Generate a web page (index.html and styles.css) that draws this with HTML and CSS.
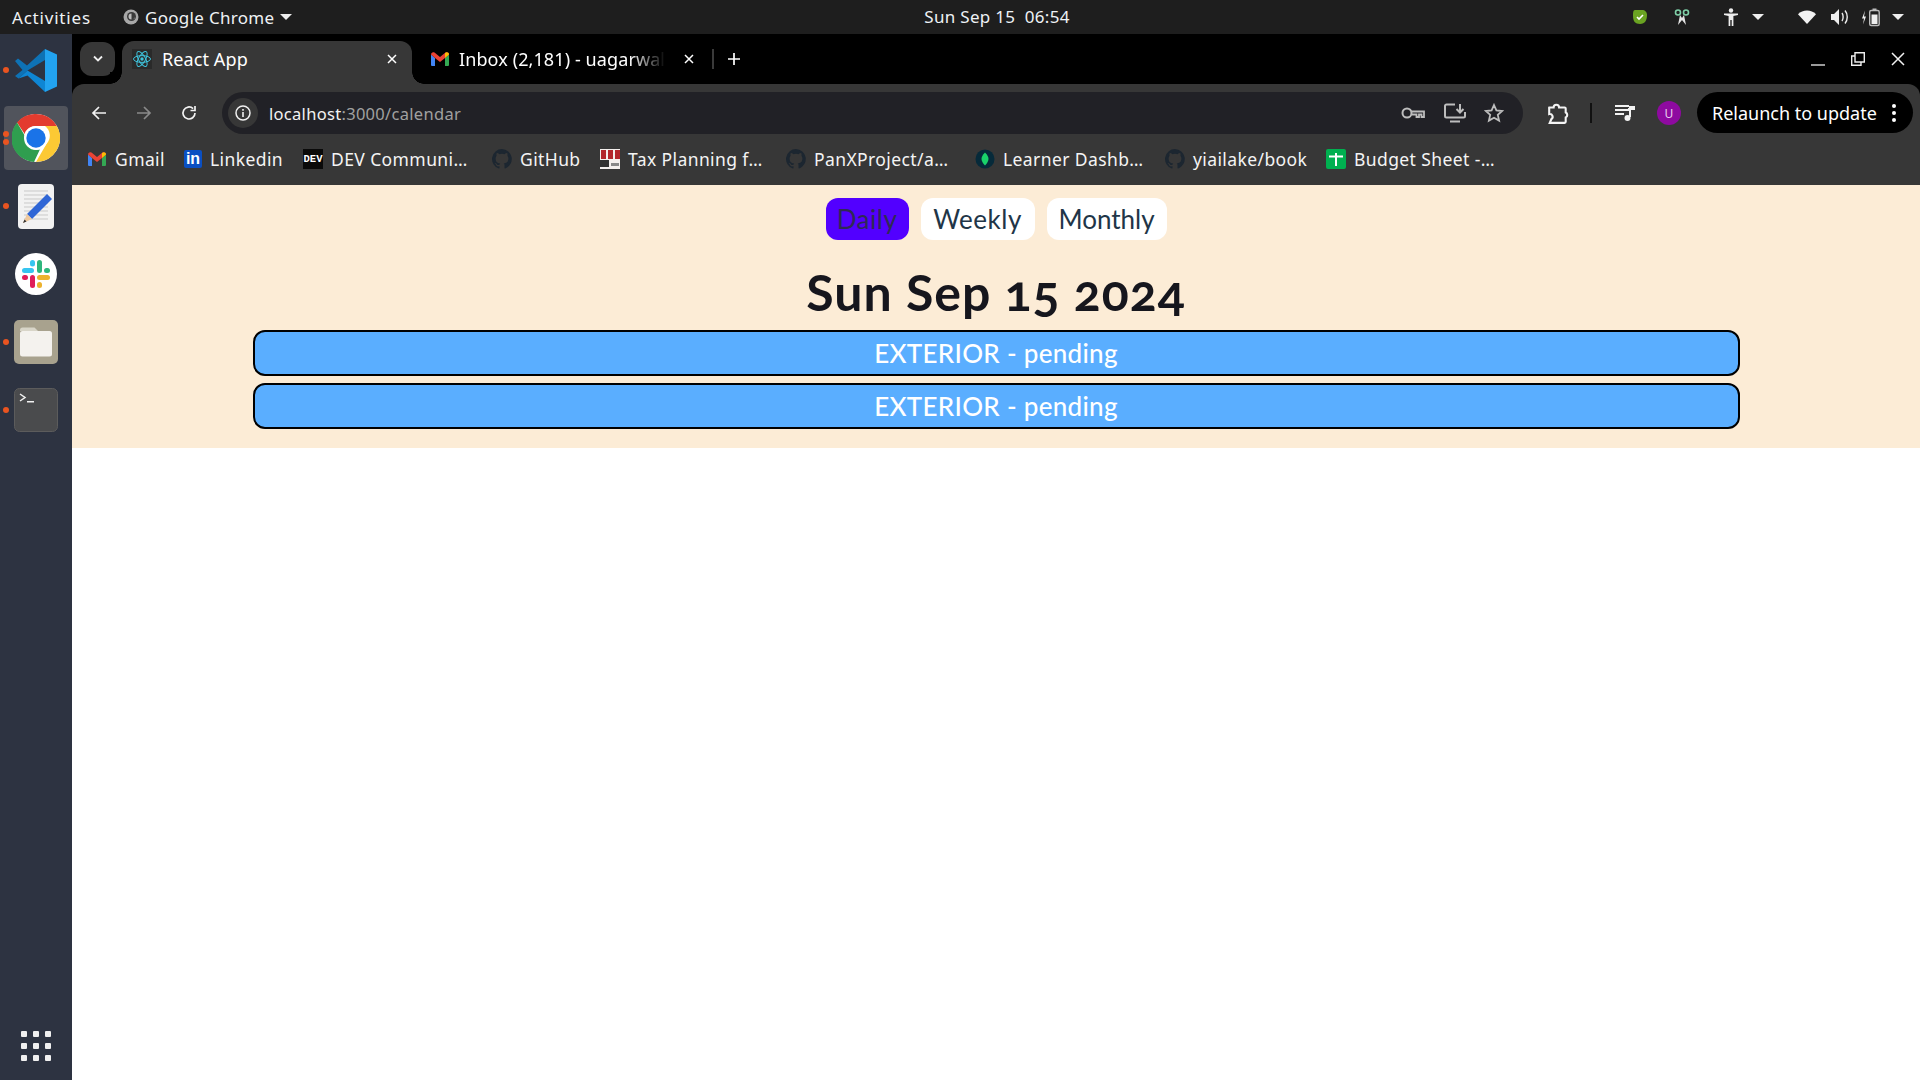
FILE: index.html
```html
<!DOCTYPE html>
<html lang="en">
<head>
<meta charset="utf-8">
<title>React App</title>
<link rel="stylesheet" href="styles.css">
</head>
<body>
<div class="screen">
  <header class="topbar">
    <div class="top-left">
      <span class="activities">Activities</span>
      <span class="app-menu">
        <svg class="app-icon" viewBox="0 0 16 16"><circle cx="8" cy="8" r="7.500" fill="#a8a8a8"/><circle cx="8.500" cy="7.500" r="4.500" fill="#3a3a3a"/><path d="M8.500 4.500a3 3 0 1 0 3 3v2a5 5 0 0 1-3 1" fill="#bdbdbd"/></svg>
        Google Chrome
        <i class="caret"></i>
      </span>
    </div>
    <div class="clock">Sun Sep 15&nbsp;&nbsp;06:54</div>
    <div class="tray">
      <svg class="tray-shield" viewBox="0 0 16 16"><path d="M3 1h7c3 0 5 2 5 5 0 5-2 9-7 9-5 0-7-3-7-8 0-3 0-6 2-6z" fill="#6aa322"/><path d="M5 8l2 2 4-4" fill="none" stroke="#fff" stroke-width="1.600"/></svg>
      <svg class="tray-scissors" viewBox="0 0 16 17"><circle cx="4" cy="3.500" r="2.500" fill="none" stroke="#7fd0a8" stroke-width="1.600"/><circle cx="12" cy="3.500" r="2.500" fill="none" stroke="#7fd0a8" stroke-width="1.600"/><path d="M6 6l-2 10 4-5 4 5-2-10-2 3z" fill="#e4e4e4"/></svg>
      <svg class="tray-person" viewBox="0 0 16 18"><circle cx="8" cy="2.500" r="2.200" fill="#eee"/><path d="M1 5.500h14v1.600l-4.600.8V18H8.700v-6H7.300v6H5.600V7.900L1 7.100z" fill="#eee"/></svg>
      <i class="caret tray-caret"></i>
      <svg class="tray-wifi" viewBox="0 0 18 14"><path d="M0 4.200C2.400 1.800 5.600.5 9 .5s6.600 1.300 9 3.700L9 14z" fill="#f2f2f2"/></svg>
      <svg class="tray-volume" viewBox="0 0 20 18"><path d="M1 6h3l5-5v16l-5-5H1z" fill="#eee"/><path d="M12 5c1.500 2 1.500 6 0 8M15 2.500c3 3.500 3 9.500 0 13" fill="none" stroke="#eee" stroke-width="1.400"/></svg>
      <svg class="tray-battery" viewBox="0 0 18 18"><path d="M3 2L0 10h2l-1 6 3-8H2z" fill="#eee"/><rect x="7.700" y="2" width="9.500" height="15" rx="1.500" fill="none" stroke="#bbb" stroke-width="1.400"/><rect x="10.500" y="0" width="4" height="2" fill="#bbb"/><rect x="9.500" y="6" width="6" height="9.500" fill="#eee"/></svg>
      <i class="caret"></i>
    </div>
  </header>

  <div class="desktop">
    <nav class="dock">
      <div class="dock-slot">
        <span class="run-dot"></span>
        <svg class="ic-vscode" viewBox="0 0 42 43"><path d="M0 12l3-2.500 9 7L30 0v11L12.500 21.500 3.500 29.500 0 27l7.500-6z" fill="#0e72b5"/><path d="M3.500 29.500l9-8L30 32v11L12.500 26.500z" fill="#0e86d4"/><path d="M30 0l12 5.500v32L30 43z" fill="#22a3f0"/></svg>
      </div>
      <div class="dock-slot is-active">
        <span class="run-dot run-dot-a"></span>
        <span class="run-dot run-dot-b"></span>
        <svg class="ic-chrome" viewBox="0 0 48 48">
          <circle cx="24" cy="24" r="24" fill="#fff"/>
          <path d="M24 0a24 24 0 0 1 20.800 12H24a12 12 0 0 0-11.300 8L5 8.500A24 24 0 0 1 24 0z" fill="#e33b2e"/>
          <path d="M44.800 12A24 24 0 0 1 24 48l10.400-18A12 12 0 0 0 33 12z" fill="#fcc934"/>
          <path d="M5 8.500l8 13.500a12 12 0 0 0 15 13.300L22 47.900A24 24 0 0 1 5 8.500z" fill="#2f9e4f"/>
          <circle cx="24" cy="24" r="12" fill="#fff"/>
          <circle cx="24" cy="24" r="9.700" fill="#1a73e8"/>
        </svg>
      </div>
      <div class="dock-slot">
        <span class="run-dot"></span>
        <svg class="ic-editor" viewBox="0 0 36 45">
          <rect width="36" height="45" rx="4" fill="#f2f2f2"/>
          <path d="M6 7h24M6 11h24M6 15h24M6 19h24M6 23h24M6 27h24M6 31h24M6 35h24" stroke="#c9c9c9" stroke-width="1"/>
          <path d="M29 10l5 5-20 20-5-5z" fill="#2f66d6"/>
          <path d="M9 30l5 5-9 4z" fill="#eec9a0"/>
          <path d="M5 39l1.500-3.500 2 2z" fill="#333"/>
        </svg>
      </div>
      <div class="dock-slot">
        <svg class="ic-slack" viewBox="0 0 42 42">
          <circle cx="21" cy="21" r="21" fill="#fff"/>
          <rect x="7" y="15" width="12" height="5" rx="2.500" fill="#36c5f0"/><rect x="15" y="7" width="5" height="6.500" rx="2.500" fill="#36c5f0"/>
          <rect x="22" y="7" width="5" height="13" rx="2.500" fill="#2eb67d"/><rect x="29" y="15" width="6" height="5" rx="2.500" fill="#2eb67d"/>
          <rect x="22" y="22" width="13" height="5" rx="2.500" fill="#ecb22e"/><rect x="22" y="29" width="5" height="6" rx="2.500" fill="#ecb22e"/>
          <rect x="15" y="22" width="5" height="13" rx="2.500" fill="#e01e5a"/><rect x="7" y="22" width="6" height="5" rx="2.500" fill="#e01e5a"/>
        </svg>
      </div>
      <div class="dock-slot">
        <span class="run-dot"></span>
        <svg class="ic-files" viewBox="0 0 44 44">
          <rect width="44" height="44" rx="5" fill="#a8a28e"/>
          <path d="M6 10a2.500 2.500 0 0 1 2.500-2.500h12L24 11h-18z" fill="#d8d5c8"/>
          <rect x="6" y="11" width="32" height="25.500" rx="2.500" fill="#f4f2ee"/>
        </svg>
      </div>
      <div class="dock-slot">
        <span class="run-dot"></span>
        <svg class="ic-terminal" viewBox="0 0 44 44">
          <rect x="0.500" y="0.500" width="43" height="43" rx="5" fill="#4a4b4d" stroke="#5c5c5c"/>
          <path d="M6 6l5 3.500-5 3.500" fill="none" stroke="#f2f2f2" stroke-width="1.500"/>
          <rect x="13" y="13" width="7" height="1.500" fill="#f2f2f2"/>
        </svg>
      </div>
      <div class="dock-slot apps">
        <div class="apps-grid"><i></i><i></i><i></i><i></i><i></i><i></i><i></i><i></i><i></i></div>
      </div>
    </nav>

    <div class="browser">
      <div class="tabstrip">
        <button class="tab-search">
          <svg viewBox="0 0 12 8" class="ic-chev"><path d="M2 1.500l4 4 4-4" fill="none" stroke="#f0f0f0" stroke-width="1.800"/></svg>
        </button>
        <div class="tab tab-active">
          <span class="favicon-react">
            <svg viewBox="0 0 20 20"><rect width="20" height="20" fill="#2a2a2a"/><g fill="none" stroke="#3fc3dc" stroke-width="1"><ellipse cx="10" cy="10" rx="8.500" ry="3.400"/><ellipse cx="10" cy="10" rx="8.500" ry="3.400" transform="rotate(60 10 10)"/><ellipse cx="10" cy="10" rx="8.500" ry="3.400" transform="rotate(120 10 10)"/></g><circle cx="10" cy="10" r="1.700" fill="#3fc3dc"/></svg>
          </span>
          <span class="tab-title">React App</span>
          <svg class="tab-close" viewBox="0 0 10 10"><path d="M1 1l8 8M9 1l-8 8" stroke="#fff" stroke-width="1.500"/></svg>
        </div>
        <div class="tab tab-other">
          <svg class="ic-gmail" viewBox="0 0 18 14"><path d="M0 2.500V13a1 1 0 0 0 1 1h3V6z" fill="#4285f4"/><path d="M18 2.500V13a1 1 0 0 1-1 1h-3V6z" fill="#34a853"/><path d="M0 2.500C0 .500 2 -.500 3.500.600L9 5l5.500-4.400C16-.500 18 .500 18 2.500L14 6 9 10 4 6z" fill="#ea4335"/><path d="M14 .900C16-.500 18 .500 18 2.500L14 6z" fill="#fbbc04"/></svg>
          <span class="tab-title tab-title-fade">Inbox (2,181) - uagarwal3</span>
          <svg class="tab-close tab-close-other" viewBox="0 0 10 10"><path d="M1 1l8 8M9 1l-8 8" stroke="#fff" stroke-width="1.500"/></svg>
        </div>
        <span class="tab-sep"></span>
        <svg class="tab-plus" viewBox="0 0 14 14"><path d="M7 1v12M1 7h12" stroke="#fff" stroke-width="1.700"/></svg>
        <div class="winctl">
          <svg viewBox="0 0 14 14" class="win-btn"><path d="M0 13h14" stroke="#ddd" stroke-width="1.400"/></svg>
          <svg viewBox="0 0 14 14" class="win-btn"><path d="M4 .700h9.300V10H4zM4 4H.700v9.300H10V10" fill="none" stroke="#eee" stroke-width="1.400"/></svg>
          <svg viewBox="0 0 14 14" class="win-btn"><path d="M1 1l12 12M13 1L1 13" stroke="#f2f2f2" stroke-width="1.500"/></svg>
        </div>
      </div>

      <div class="toolbar">
        <svg class="nav-ic nav-back" viewBox="0 0 16 16"><path d="M15 8H2M8 2L2 8l6 6" fill="none" stroke="#f2f2f2" stroke-width="1.700"/></svg>
        <svg class="nav-ic nav-forward" viewBox="0 0 16 16"><path d="M1 8h13M8 2l6 6-6 6" fill="none" stroke="#8a8a8a" stroke-width="1.700"/></svg>
        <svg class="nav-ic nav-reload" viewBox="0 0 16 16"><path d="M14 8a6 6 0 1 1-1.900-4.400M14 1v4.500H9.500" fill="none" stroke="#f2f2f2" stroke-width="1.700"/></svg>
        <div class="omnibox">
          <span class="site-info"><svg viewBox="0 0 16 16"><circle cx="8" cy="8" r="7" fill="none" stroke="#f0f0f0" stroke-width="1.500"/><path d="M8 7v5M8 4v1.700" stroke="#f0f0f0" stroke-width="1.600"/></svg></span>
          <span class="url"><span class="url-host">localhost</span>:3000/calendar</span>
          <span class="omni-actions">
            <svg class="omni-key" viewBox="0 0 24 14"><circle cx="6" cy="7" r="4.500" fill="none" stroke="#bdbdbd" stroke-width="2"/><path d="M10.500 5.500H23V11h-2.500V8.500H18V11h-2.500V8.500H10.500" fill="none" stroke="#bdbdbd" stroke-width="1.800"/></svg>
            <svg class="omni-install" viewBox="0 0 22 20"><path d="M11 1.500H2.500a1.500 1.500 0 0 0-1.500 1.500v10a1.500 1.500 0 0 0 1.500 1.500h17A1.500 1.500 0 0 0 21 13V9M6 18.500h10" fill="none" stroke="#bdbdbd" stroke-width="2"/><path d="M16 1v8M12.500 6l3.500 3.500L19.500 6" fill="none" stroke="#bdbdbd" stroke-width="2"/></svg>
            <svg class="omni-star" viewBox="0 0 20 20"><path d="M10 2l2.400 5.400 5.800.6-4.400 3.900 1.300 5.700L10 14.700l-5.100 2.900 1.300-5.700L1.800 8l5.800-.6z" fill="none" stroke="#bdbdbd" stroke-width="1.800"/></svg>
          </span>
        </div>
        <svg class="tool-ext" viewBox="0 0 20 20"><path d="M2 5h4a2.500 2.500 0 0 1 5 0h5a1 1 0 0 1 1 1v3.500a2.500 2.500 0 0 1 0 4.500V18a1 1 0 0 1-1 1H2.500l1.500-3.500a2.500 2.500 0 0 0-2-4.500V6a1 1 0 0 1 0-1z" fill="none" stroke="#f4f4f4" stroke-width="1.900"/></svg>
        <span class="tool-sep"></span>
        <svg class="tool-media" viewBox="0 0 20 18"><path d="M0 2h14M0 6h14M0 10h9" stroke="#f2f2f2" stroke-width="2"/><path d="M13 5h6V3h-4v10" fill="none" stroke="#f2f2f2" stroke-width="2"/><circle cx="12.500" cy="14" r="3" fill="#f2f2f2"/></svg>
        <span class="avatar">U</span>
        <div class="relaunch">
          <span>Relaunch to update</span>
          <span class="dots"><i></i><i></i><i></i></span>
        </div>
      </div>

      <div class="bookmarks">
        <span class="bm bm-gmail"><svg class="ic-gmail" viewBox="0 0 18 14"><path d="M0 2.500V13a1 1 0 0 0 1 1h3V6z" fill="#4285f4"/><path d="M18 2.500V13a1 1 0 0 1-1 1h-3V6z" fill="#34a853"/><path d="M0 2.500C0 .500 2 -.500 3.500.600L9 5l5.500-4.400C16-.500 18 .500 18 2.500L14 6 9 10 4 6z" fill="#ea4335"/><path d="M14 .900C16-.500 18 .500 18 2.500L14 6z" fill="#fbbc04"/></svg>Gmail</span>
        <span class="bm bm-linkedin"><span class="fav-li">in</span>Linkedin</span>
        <span class="bm bm-dev"><span class="fav-dev">DEV</span>DEV Communi…</span>
        <span class="bm bm-github"><svg class="fav" viewBox="0 0 16 16"><path fill="#1c2630" d="M8 0a8 8 0 0 0-2.500 15.600c.4.100.5-.2.500-.4v-1.400c-2.200.5-2.700-1-2.700-1-.4-.9-.9-1.200-.9-1.200-.7-.5.100-.5.100-.5.800.100 1.200.8 1.200.8.700 1.200 1.900.9 2.300.7.100-.5.300-.9.500-1.100-1.800-.2-3.600-.9-3.600-4 0-.9.300-1.600.8-2.100-.1-.2-.4-1 .1-2.100 0 0 .7-.2 2.200.8a7.500 7.500 0 0 1 4 0c1.500-1 2.200-.8 2.200-.8.400 1.100.2 1.900.1 2.100.5.600.8 1.300.8 2.100 0 3.100-1.900 3.700-3.700 3.900.3.300.6.800.6 1.500v2.200c0 .2.100.5.600.4A8 8 0 0 0 8 0z"/></svg>GitHub</span>
        <span class="bm bm-tax"><svg class="fav" viewBox="0 0 20 20"><rect width="20" height="20" fill="#f4f0ee"/><rect x="1" y="1" width="5" height="9" fill="#b3262c"/><rect x="8" y="1" width="5" height="9" fill="#b3262c"/><rect x="15" y="1" width="5" height="9" fill="#b3262c"/><rect x="0" y="11" width="9" height="7" fill="#333"/><rect x="11" y="14" width="8" height="3" fill="#888"/></svg>Tax Planning f…</span>
        <span class="bm bm-pan"><svg class="fav" viewBox="0 0 16 16"><path fill="#1c2630" d="M8 0a8 8 0 0 0-2.500 15.600c.4.100.5-.2.500-.4v-1.400c-2.200.5-2.700-1-2.700-1-.4-.9-.9-1.200-.9-1.200-.7-.5.100-.5.100-.5.800.100 1.200.8 1.200.8.700 1.200 1.900.9 2.300.7.100-.5.300-.9.500-1.100-1.800-.2-3.600-.9-3.600-4 0-.9.300-1.600.8-2.100-.1-.2-.4-1 .1-2.100 0 0 .7-.2 2.200.8a7.500 7.500 0 0 1 4 0c1.500-1 2.200-.8 2.200-.8.400 1.100.2 1.900.1 2.100.5.600.8 1.300.8 2.100 0 3.100-1.900 3.700-3.700 3.900.3.300.6.800.6 1.500v2.200c0 .2.100.5.600.4A8 8 0 0 0 8 0z"/></svg>PanXProject/a…</span>
        <span class="bm bm-learner"><svg class="fav" viewBox="0 0 20 20"><circle cx="10" cy="10" r="9.500" fill="#062a3a"/><path d="M10 3.500c2.500 2.500 3.500 4.500 3.500 6.500S12 14.500 10 16.500C8 14.500 6.500 12 6.500 10S7.500 6 10 3.500z" fill="#19d26a"/></svg>Learner Dashb…</span>
        <span class="bm bm-yia"><svg class="fav" viewBox="0 0 16 16"><path fill="#1c2630" d="M8 0a8 8 0 0 0-2.500 15.600c.4.100.5-.2.500-.4v-1.400c-2.200.5-2.700-1-2.700-1-.4-.9-.9-1.200-.9-1.200-.7-.5.100-.5.100-.5.800.100 1.200.8 1.200.8.700 1.200 1.900.9 2.300.7.100-.5.300-.9.500-1.100-1.800-.2-3.600-.9-3.600-4 0-.9.300-1.600.8-2.100-.1-.2-.4-1 .1-2.100 0 0 .7-.2 2.200.8a7.500 7.500 0 0 1 4 0c1.500-1 2.200-.8 2.200-.8.400 1.100.2 1.900.1 2.100.5.600.8 1.300.8 2.100 0 3.100-1.900 3.700-3.700 3.900.3.300.6.800.6 1.500v2.200c0 .2.100.5.600.4A8 8 0 0 0 8 0z"/></svg>yiailake/book</span>
        <span class="bm bm-budget"><svg class="fav" viewBox="0 0 20 20"><rect width="20" height="20" rx="2" fill="#00b050"/><path d="M3 7.500h14M10 4v13" stroke="#fff" stroke-width="2"/></svg>Budget Sheet -…</span>
      </div>

      <main class="page">
        <section class="calendar">
          <div class="view-tabs">
            <button class="view-btn view-daily">Daily</button>
            <button class="view-btn view-weekly">Weekly</button>
            <button class="view-btn view-monthly">Monthly</button>
          </div>
          <h1 class="date-title">Sun Sep 15 2024</h1>
          <div class="event">EXTERIOR - pending</div>
          <div class="event">EXTERIOR - pending</div>
        </section>
      </main>
    </div>
  </div>
</div>
</body>
</html>
```
FILE: styles.css
```css
* { box-sizing: border-box; }
html, body { margin: 0; padding: 0; background: #fff; }
body { font-family: "Noto Sans", sans-serif; }
svg { display: block; flex: none; }
.screen { width: 1920px; height: 1080px; display: flex; flex-direction: column; overflow: hidden; }

/* top bar */
.topbar { height: 34px; flex: none; background: #1e1e1e; color: #eef2f5; display: grid; grid-template-columns: 1fr auto 1fr; align-items: center; font-size: 17px; letter-spacing: 0.3px; padding: 0 16px 0 12px; }
.top-left { display: flex; align-items: center; }
.activities { width: 111px; letter-spacing: 0.8px; }
.app-menu { display: flex; align-items: center; gap: 6px; }
.app-icon { width: 16px; height: 16px; }
.caret { display: block; width: 0; height: 0; border-left: 6px solid transparent; border-right: 6px solid transparent; border-top: 6px solid #eee; }
.clock { text-align: center; margin-left: 78px; padding-bottom: 1px; }
.tray { display: flex; align-items: center; justify-content: flex-end; }
.tray-shield { width: 16px; height: 16px; margin-right: 26px; }
.tray-scissors { width: 16px; height: 17px; margin-right: 33px; }
.tray-person { width: 16px; height: 18px; margin-right: 13px; }
.tray-caret { margin-right: 34px; }
.tray-wifi { width: 18px; height: 14px; margin-right: 14px; }
.tray-volume { width: 20px; height: 18px; margin-right: 12px; }
.tray-battery { width: 18px; height: 19px; margin-right: 12px; }

.desktop { flex: 1; display: flex; min-height: 0; }

/* dock */
.dock { width: 72px; flex: none; background: #2d3341; display: flex; flex-direction: column; align-items: center; gap: 4px; padding: 4px 0 2px; }
.dock-slot { width: 64px; height: 64px; display: flex; align-items: center; justify-content: center; position: relative; border-radius: 4px; }
.dock-slot.is-active { background: #51545c; }
.dock-slot.apps { margin-top: auto; }
.run-dot { position: absolute; left: 0; top: 29px; width: 6px; height: 6px; border-radius: 50%; background: #e95420; margin-left: -1px; }
.run-dot-a { top: 25px; }
.run-dot-b { top: 33px; }
.ic-vscode { width: 42px; height: 43px; }
.ic-chrome { width: 48px; height: 48px; }
.ic-editor { width: 36px; height: 45px; }
.ic-slack { width: 42px; height: 42px; }
.ic-files, .ic-terminal { width: 44px; height: 44px; }
.apps-grid { display: grid; grid-template-columns: repeat(3, 6px); grid-auto-rows: 6px; gap: 6px; }
.apps-grid i { background: #f0f0f0; border-radius: 1px; }

/* browser */
.browser { flex: 1; display: flex; flex-direction: column; min-width: 0; background: #000; }
.tabstrip { height: 50px; flex: none; background: #000; display: flex; align-items: flex-end; color: #fff; font-size: 18px; position: relative; }
.tab-search { width: 35px; height: 34px; margin: 0 7px 8px 8px; background: #373737; border: 0; border-radius: 12px; display: flex; align-items: center; justify-content: center; padding: 0; flex: none; }
.ic-chev { width: 12px; height: 8px; }
.ic-gmail { width: 18px; height: 14px; }
.tab { height: 43px; display: flex; align-items: center; position: relative; flex: none; padding-bottom: 8px; }
.tab-active { width: 290px; background: #373737; border-radius: 12px 12px 0 0; padding-left: 10px; }
.tab-active::before, .tab-active::after { content: ""; position: absolute; bottom: 0; width: 12px; height: 12px; background: radial-gradient(circle at 0 0, #000 11.500px, #373737 12px); }
.tab-active::before { left: -12px; }
.tab-active::after { right: -12px; background: radial-gradient(circle at 100% 0, #000 11.500px, #373737 12px); }
.favicon-react { width: 20px; height: 20px; margin-right: 10px; }
.favicon-react svg { width: 20px; height: 20px; }
.tab-title { flex: 1; white-space: nowrap; overflow: hidden; letter-spacing: 0.1px; }
.tab-close { width: 10px; height: 10px; margin-right: 15px; }
.tab-other { width: 290px; padding-left: 19px; }
.tab-other .ic-gmail { margin-right: 10px; }
.tab-title-fade { -webkit-mask-image: linear-gradient(to right, #000 80%, transparent 97%); mask-image: linear-gradient(to right, #000 80%, transparent 97%); flex: none; width: 213px; margin-right: 12px; }
.tab-close-other { margin-right: 8px; }
.tab-sep { width: 2px; height: 20px; background: #3a3a3a; margin: 0 0 15px 10px; flex: none; }
.tab-plus { width: 14px; height: 14px; margin: 0 0 18px 13px; }
.winctl { margin-left: auto; display: flex; gap: 26px; padding-right: 15px; margin-bottom: 18px; }
.win-btn { width: 14px; height: 14px; }

.toolbar { height: 50px; flex: none; background: #373737; border-radius: 12px 12px 0 0; display: flex; align-items: flex-start; padding: 8px 7px 0 0; color: #fff; }
.nav-ic { width: 16px; height: 16px; margin-top: 13px; }
.nav-back { margin-left: 19px; }
.nav-forward { margin-left: 29px; }
.nav-reload { margin-left: 29px; }
.omnibox { width: 1301px; flex: none; height: 42px; margin-left: 25px; border-radius: 21px; background: #212126; display: flex; align-items: center; padding: 0 19px 0 6px; font-size: 16.500px; letter-spacing: 0.3px; color: #a0a0a0; }
.site-info { width: 30px; height: 30px; flex: none; border-radius: 50%; background: #373737; display: flex; align-items: center; justify-content: center; margin-right: 11px; }
.site-info svg { width: 16px; height: 16px; }
.url { flex: 1; white-space: nowrap; }
.url-host { color: #f2f2f2; }
.omni-actions { display: flex; align-items: center; gap: 18.500px; }
.omni-key { width: 24px; height: 14px; }
.omni-install { width: 22px; height: 20px; }
.omni-star { width: 20px; height: 20px; }
.tool-ext { width: 22px; height: 22px; margin: 10px 0 0 24px; }
.tool-sep { width: 2px; height: 20px; background: #111; margin: 11px 0 0 21px; flex: none; }
.tool-media { width: 20px; height: 18px; margin: 12px 0 0 23px; }
.avatar { width: 24px; height: 24px; flex: none; border-radius: 50%; background: #8e0aa0; color: #e8d0ee; font-size: 12px; display: flex; align-items: center; justify-content: center; margin: 9px 0 0 22px; }
.relaunch { margin: 0 0 0 16px; width: 216px; flex: none; height: 41px; background: #000; border-radius: 21px; display: flex; align-items: center; justify-content: space-between; padding: 0 17px 0 15px; font-size: 18px; color: #fff; white-space: nowrap; }
.dots { display: flex; flex-direction: column; gap: 3px; }
.dots i { width: 4px; height: 4px; border-radius: 50%; background: #fff; }

.bookmarks { height: 51px; flex: none; background: #373737; display: flex; align-items: center; padding: 0 0 2px 16px; color: #f4f4f4; font-size: 17.500px; letter-spacing: 0.4px; }
.bm { display: flex; align-items: center; gap: 8px; white-space: nowrap; flex: none; }
.bm .ic-gmail { margin-right: 1px; }
.fav { width: 20px; height: 20px; }
.bm-gmail { width: 96px; }
.bm-linkedin { width: 119px; }
.bm-dev { width: 189px; }
.bm-github { width: 108px; }
.bm-tax { width: 186px; }
.bm-pan { width: 189px; }
.bm-learner { width: 190px; }
.bm-yia { width: 161px; }
.fav-li { width: 18px; height: 18px; background: #0a4fc2; color: #fff; font-family: "Liberation Sans", sans-serif; font-weight: 700; font-size: 16px; line-height: 18px; text-align: center; border-radius: 2px; letter-spacing: 0; }
.fav-dev { width: 20px; height: 20px; background: #0a0a0a; color: #fff; font-family: "Liberation Mono", monospace; font-weight: 700; font-size: 10.500px; line-height: 20px; text-align: center; letter-spacing: 0; }

/* page */
.page { flex: 1; background: #fff; }
.calendar { background: #fcecd6; height: 263px; padding-top: 13px; display: flex; flex-direction: column; align-items: center; font-family: Lato, sans-serif; }
.view-tabs { display: flex; gap: 12px; height: 42px; }
.view-btn { height: 42px; border: 0; border-radius: 12px; background: #fff; color: #213547; font-family: inherit; font-size: 26px; padding: 0; text-align: center; letter-spacing: 0.5px; }
.view-daily { width: 83px; background: #5200ff; color: #2f2a55; }
.view-weekly { width: 114px; }
.view-monthly { width: 120px; letter-spacing: 0; }
.date-title { margin: 24px 0 10px; font-size: 50px; line-height: 56px; font-weight: 700; color: #16161d; letter-spacing: 1px; height: 56px; font-variant-numeric: oldstyle-nums; }
.event { width: 1487px; height: 46px; margin-bottom: 7px; border: 2px solid #000; border-radius: 12px; background: #5aaeff; color: #fff; font-size: 26px; line-height: 42px; text-align: center; font-weight: 500; letter-spacing: 0.3px; }
```
